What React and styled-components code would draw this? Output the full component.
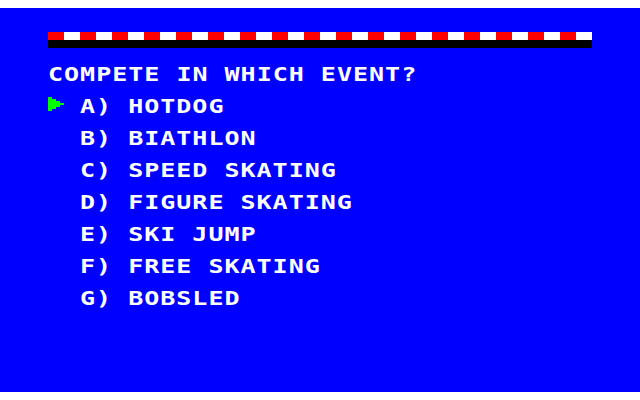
import styled, { createGlobalStyle } from "styled-components";

const GlobalStyle = createGlobalStyle`
  html, body {
    margin: 0;
    padding: 0;
    background: #ffffff;
  }
  body {
    padding: 8px 0;
  }
`;

const Screen = styled.div`
  width: 640px;
  height: 384px;
  background: #0000ff;
  box-sizing: border-box;
  padding: 24px 48px 0 48px;
  overflow: hidden;
`;

const Stripe = styled.div`
  width: 544px;
  display: flex;
  flex-direction: column;
`;

const Checker = styled.div`
  height: 8px;
  background: repeating-linear-gradient(
    to right,
    #ff0000 0 16px,
    #ffffff 16px 32px
  );
`;

const BlackBar = styled.div`
  height: 8px;
  background: #000000;
`;

const Menu = styled.div`
  display: flex;
  flex-direction: column;
  margin-top: 10px;
`;

const Row = styled.div`
  display: flex;
  align-items: center;
  height: 32px;
  padding-left: ${(props) => (props.indent ? "32px" : "0")};
  position: relative;
`;

const Label = styled.span`
  font-family: "DejaVu Sans Mono", "Liberation Mono", monospace;
  font-weight: bold;
  font-size: 20px;
  line-height: 32px;
  letter-spacing: 0.8px;
  color: #ffffff;
  white-space: pre;
  transform: scaleX(1.25);
  transform-origin: left center;
`;

const Cursor = styled.svg`
  position: absolute;
  left: 0;
  top: 7px;
`;

const events = [
  "A) HOTDOG",
  "B) BIATHLON",
  "C) SPEED SKATING",
  "D) FIGURE SKATING",
  "E) SKI JUMP",
  "F) FREE SKATING",
  "G) BOBSLED",
];

export default function App() {
  const selected = 0;

  return (
    <>
      <GlobalStyle />
      <Screen>
        <Stripe>
          <Checker />
          <BlackBar />
        </Stripe>
        <Menu>
          <Row>
            <Label>COMPETE IN WHICH EVENT?</Label>
          </Row>
          {events.map((ev, i) => (
            <Row key={i} indent>
              {i === selected && (
                <Cursor width="16" height="14" viewBox="0 0 16 14">
                  <rect x="0" y="0" width="4" height="14" fill="#00ff00" />
                  <rect x="4" y="2" width="4" height="10" fill="#00ff00" />
                  <rect x="8" y="4" width="4" height="6" fill="#00ff00" />
                  <rect x="12" y="6" width="4" height="2" fill="#00ff00" />
                </Cursor>
              )}
              <Label>{ev}</Label>
            </Row>
          ))}
        </Menu>
      </Screen>
    </>
  );
}
